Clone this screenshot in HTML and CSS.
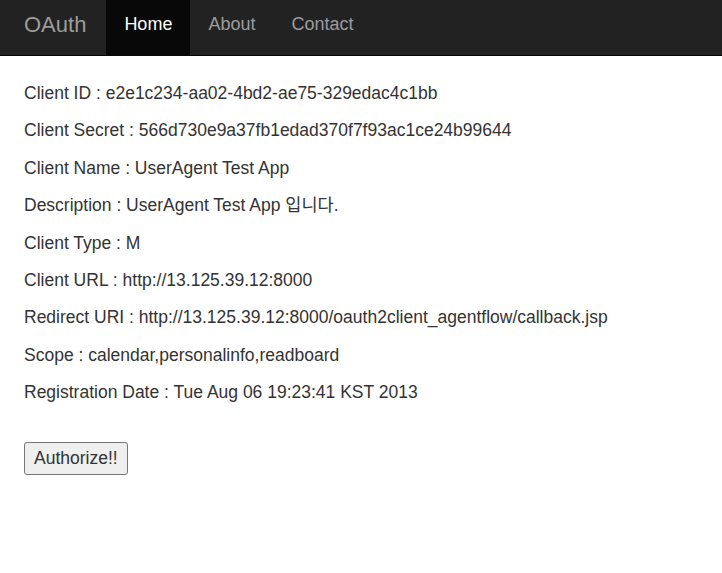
FILE: index.html
```html
<!DOCTYPE html>
<html lang="ko">
<head>
<meta charset="utf-8">
<title>OAuth</title>
<link rel="stylesheet" href="styles.css">
</head>
<body>
<nav class="navbar">
  <a class="brand" href="#">OAuth</a>
  <ul class="nav">
    <li class="active"><a href="#">Home</a></li>
    <li><a href="#">About</a></li>
    <li><a href="#">Contact</a></li>
  </ul>
</nav>
<main class="content">
  <p>Client ID : e2e1c234-aa02-4bd2-ae75-329edac4c1bb</p>
  <p>Client Secret : 566d730e9a37fb1edad370f7f93ac1ce24b99644</p>
  <p>Client Name : UserAgent Test App</p>
  <p>Description : UserAgent Test App 입니다.</p>
  <p>Client Type : M</p>
  <p>Client URL : http://13.125.39.12:8000</p>
  <p>Redirect URI : http://13.125.39.12:8000/oauth2client_agentflow/callback.jsp</p>
  <p>Scope : calendar,personalinfo,readboard</p>
  <p>Registration Date : Tue Aug 06 19:23:41 KST 2013</p>
  <form class="auth-form">
    <button type="button" class="btn">Authorize!!</button>
  </form>
</main>
</body>
</html>
```

FILE: styles.css
```css
* { box-sizing: border-box; }
html, body { margin: 0; padding: 0; background: #fff; }
body {
  font-family: "Liberation Sans", Arial, "Noto Sans CJK KR", sans-serif;
  font-size: 17.5px;
  color: #333;
}
.navbar {
  display: flex;
  align-items: stretch;
  height: 56px;
  background: #222;
  border-bottom: 1px solid #080808;
  padding-left: 24px;
}
.brand {
  display: flex;
  align-items: center;
  padding-bottom: 6px;
  font-size: 22px;
  color: #9d9d9d;
  text-decoration: none;
  padding-right: 20px;
}
.nav {
  display: flex;
  list-style: none;
  margin: 0;
  padding: 0;
}
.nav li a {
  display: flex;
  align-items: center;
  height: 100%;
  padding: 0 18px 6px;
  font-size: 18px;
  color: #9d9d9d;
  text-decoration: none;
}
.nav li.active a {
  background: #080808;
  color: #fff;
}
.content {
  padding: 26px 24px 0;
}
.content p {
  margin: 0 0 15px;
  line-height: 22.4px;
}
.auth-form {
  margin-top: 38px;
}
.btn {
  font-family: "Liberation Sans", Arial, sans-serif;
  font-size: 17.5px;
  line-height: 19px;
  color: #333;
  background: #efefef;
  border: 1px solid #767676;
  border-radius: 3px;
  padding: 6px 9px;
}
```
